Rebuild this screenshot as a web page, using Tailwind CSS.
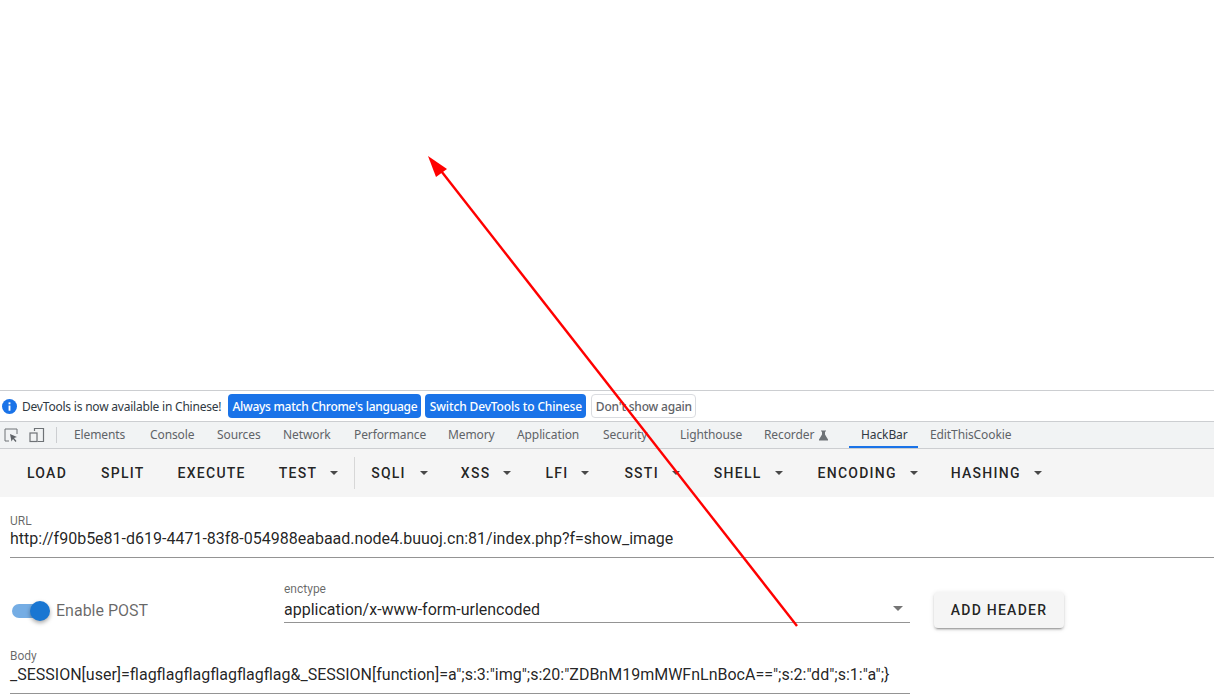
<!DOCTYPE html>
<html lang="en">
<head>
    <meta charset="UTF-8">
    <title>HackBar</title>
    <script src="https://cdn.jsdelivr.net/npm/@tailwindcss/browser@4"></script>
</head>
<body class="bg-white">
<div class="relative w-[1214px] h-[699px] overflow-hidden font-['Roboto',sans-serif]">

    <!-- page area -->
    <div class="h-[390px] bg-white"></div>

    <!-- language infobar -->
    <div class="h-[32px] border-y border-[#ccced1] flex items-center pl-[2px] font-['Noto_Sans',sans-serif] text-[12px] text-[#303942]">
        <svg class="w-[15px] h-[15px] shrink-0" viewBox="0 0 16 16"><circle cx="8" cy="8" r="8" fill="#1a73e8"/><rect x="7" y="7" width="2" height="5.5" fill="#fff"/><rect x="7" y="3.6" width="2" height="2" fill="#fff"/></svg>
        <span class="ml-[5px] pt-[1px] tracking-[-0.21px]">DevTools is now available in Chinese!</span>
        <div class="ml-[7px] h-[24px] w-[193px] pt-[1px] justify-center flex items-center rounded-[4px] bg-[#1a73e8] text-white font-medium whitespace-nowrap tracking-[-0.27px]">Always match Chrome's language</div>
        <div class="ml-[4px] h-[24px] w-[161px] pt-[1px] justify-center flex items-center rounded-[4px] bg-[#1a73e8] text-white font-medium whitespace-nowrap tracking-[-0.14px]">Switch DevTools to Chinese</div>
        <div class="ml-[5px] h-[24px] w-[105px] pt-[1px] justify-center flex items-center rounded-[4px] bg-white border border-[#dadce0] text-[#5f6368] font-medium whitespace-nowrap tracking-[-0.2px]">Don't show again</div>
    </div>

    <!-- devtools tabs -->
    <div class="h-[27px] bg-[#f1f3f4] border-b border-[#ccced1] flex items-center font-['Noto_Sans',sans-serif] text-[12px] tracking-[-0.1px] text-[#5f6368]">
        <svg class="ml-[4px] w-[14px] h-[14px] shrink-0" viewBox="0 0 14 14" fill="none"><path d="M5 13H1V1h12v5" stroke="#6e7276" stroke-width="1"/><path d="M6 6l7 3-3 1 2.5 3-1 1-2.5-3-1.500 2.500z" fill="#5f6368"/></svg>
        <svg class="ml-[11px] w-[16px] h-[16px] shrink-0" viewBox="0 0 16 16" fill="none"><path d="M5.500 4V1.500h9v13h-6" stroke="#6e7276" stroke-width="1.200"/><rect x="1" y="6" width="7" height="8.500" stroke="#6e7276" stroke-width="1.200"/></svg>
        <div class="ml-[11px] w-px h-[16px] bg-[#ccced1]"></div>
        <div class="flex items-center h-full ml-[5px] whitespace-nowrap">
            <span class="w-[76px] pl-[12px]">Elements</span>
            <span class="w-[67px] pl-[12px]">Console</span>
            <span class="w-[66px] pl-[12px]">Sources</span>
            <span class="w-[71px] pl-[12px]">Network</span>
            <span class="w-[94px] pl-[12px]">Performance</span>
            <span class="w-[69px] pl-[12px]">Memory</span>
            <span class="w-[86px] pl-[12px]">Application</span>
            <span class="w-[77px] pl-[12px]">Security</span>
            <span class="w-[84px] pl-[12px]">Lighthouse</span>
            <span class="w-[97px] pl-[12px] flex items-center">Recorder
                <svg class="ml-[4px] w-[11px] h-[11px]" viewBox="0 0 11 11"><path d="M3 0.500h5v1H7v3l3 5v1H1v-1l3-5v-3H3z" fill="#6e7276"/></svg>
            </span>
            <span class="w-[69px] pl-[12px] h-full flex items-center text-[#303942] border-b-2 border-[#1a73e8] pt-[2px]">HackBar</span>
            <span class="pl-[12px]">EditThisCookie</span>
        </div>
    </div>

    <!-- hackbar toolbar -->
    <div class="h-[48px] bg-[#f5f5f5] flex items-center pl-[11px] text-[14px] font-medium tracking-[1.25px] text-black/87 whitespace-nowrap">
        <div class="px-[16px]">LOAD</div>
        <div class="px-[16px] ml-[2px]">SPLIT</div>
        <div class="px-[16px] ml-[1px]">EXECUTE</div>
        <div class="px-[16px] ml-[1px] flex items-center">TEST<span class="ml-[13px] w-0 h-0 border-x-[4px] border-x-transparent border-t-[4px] border-t-black/70"></span></div>
        <div class="w-px h-[32px] bg-black/12"></div>
        <div class="px-[16px] flex items-center">SQLI<span class="ml-[14px] w-0 h-0 border-x-[4px] border-x-transparent border-t-[4px] border-t-black/70"></span></div>
        <div class="px-[16px] ml-[1px] flex items-center">XSS<span class="ml-[13px] w-0 h-0 border-x-[4px] border-x-transparent border-t-[4px] border-t-black/70"></span></div>
        <div class="px-[16px] ml-[2px] flex items-center">LFI<span class="ml-[13px] w-0 h-0 border-x-[4px] border-x-transparent border-t-[4px] border-t-black/70"></span></div>
        <div class="px-[16px] ml-[3px] flex items-center">SSTI<span class="ml-[13px] w-0 h-0 border-x-[4px] border-x-transparent border-t-[4px] border-t-black/70"></span></div>
        <div class="px-[16px] ml-[2px] flex items-center">SHELL<span class="ml-[13px] w-0 h-0 border-x-[4px] border-x-transparent border-t-[4px] border-t-black/70"></span></div>
        <div class="px-[16px] ml-[3px] flex items-center">ENCODING<span class="ml-[13px] w-0 h-0 border-x-[4px] border-x-transparent border-t-[4px] border-t-black/70"></span></div>
        <div class="px-[16px] ml-[1px] flex items-center">HASHING<span class="ml-[13px] w-0 h-0 border-x-[4px] border-x-transparent border-t-[4px] border-t-black/70"></span></div>
    </div>

    <!-- form -->
    <div class="pl-[10px]">
        <div class="pt-[16px] h-[61px] border-b border-[#949494]">
            <div class="text-[12px] leading-[16px] text-black/60">URL</div>
            <div class="text-[16px] leading-[24px] text-black/87 -mt-[2px]">http://f90b5e81-d619-4471-83f8-054988eabaad.node4.buuoj.cn:81/index.php?f=show_image</div>
        </div>

        <div class="flex mt-[23px] h-[66px]">
            <div class="w-[274px] flex items-center h-[60px] shrink-0">
                <div class="relative w-[38px] h-[14px] ml-[2px]">
                    <div class="w-[36px] h-[14px] rounded-full bg-[#1976d2]/60"></div>
                    <div class="absolute right-0 top-[-3px] w-[20px] h-[20px] rounded-full bg-[#1976d2] shadow-[0_2px_4px_rgba(0,0,0,0.35)]"></div>
                </div>
                <span class="ml-[6px] text-[16px] text-black/60">Enable POST</span>
            </div>
            <div class="w-[626px] shrink-0 h-[42px] border-b border-[#949494] relative">
                <div class="text-[12px] leading-[16px] text-black/60">enctype</div>
                <div class="text-[16px] leading-[24px] text-black/87 mt-[1px]">application/x-www-form-urlencoded</div>
                <span class="absolute right-[7px] top-[25px] w-0 h-0 border-x-[5px] border-x-transparent border-t-[5px] border-t-black/54"></span>
            </div>
            <div class="ml-[24px] mt-[11px] h-[36px] w-[130px] justify-center flex items-center rounded-[4px] bg-[#f5f5f5] text-[14px] font-medium tracking-[1.25px] text-black/87 shadow-[0_3px_1px_-2px_rgba(0,0,0,0.2),0_2px_2px_0_rgba(0,0,0,0.14),0_1px_5px_0_rgba(0,0,0,0.12)] whitespace-nowrap">ADD HEADER</div>
        </div>

        <div class="w-[900px] h-[47px] pt-[1px] border-b border-[#949494]">
            <div class="text-[12px] leading-[16px] text-black/60">Body</div>
            <div class="text-[16px] leading-[24px] text-black/87 -mt-[1px] whitespace-nowrap">_SESSION[user]=flagflagflagflagflagflag&amp;_SESSION[function]=a";s:3:"img";s:20:"ZDBnM19mMWFnLnBocA==";s:2:"dd";s:1:"a";}</div>
        </div>
    </div>

    <!-- annotation arrow drawn over the screenshot -->
    <svg class="absolute left-0 top-0 pointer-events-none" width="1214" height="699" viewBox="0 0 1214 699">
        <line x1="797" y1="626" x2="438" y2="167" stroke="#ff0000" stroke-width="2.400"/>
        <polygon points="428,156 447,169 436,177" fill="#ff0000"/>
    </svg>
</div>
</body>
</html>
